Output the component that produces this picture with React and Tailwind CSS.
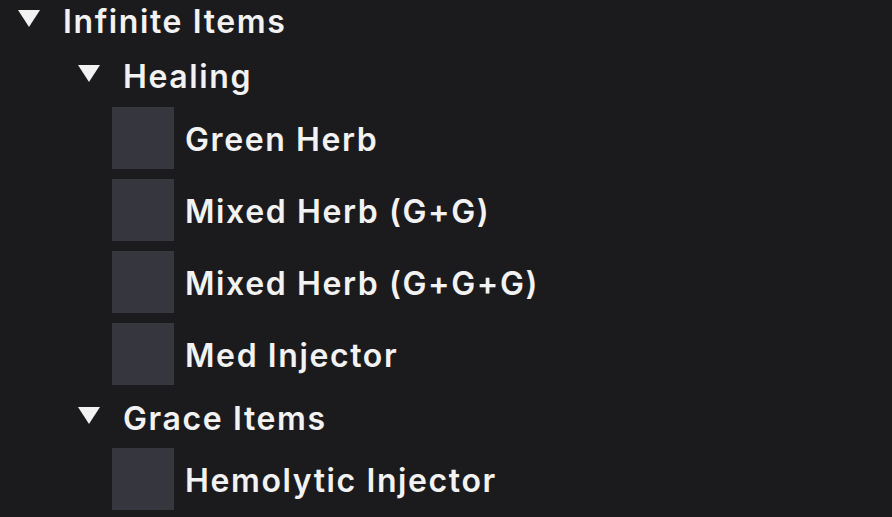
const healing = ['Green Herb', 'Mixed Herb (G+G)', 'Mixed Herb (G+G+G)', 'Med Injector'];
const grace = ['Hemolytic Injector'];

function Arrow() {
  return (
    <svg width="24" height="18" viewBox="0 0 24 18" className="shrink-0">
      <polygon points="1,1 23,1 12,18" fill="#f2f2f2" />
    </svg>
  );
}

function Node({ label, className = '' }) {
  return (
    <div className={`flex h-[42px] items-center ${className}`}>
      <div className="mb-[8px] flex w-[46px] justify-start">
        <Arrow />
      </div>
      <span className="text-[32px] font-semibold leading-none tracking-[1.6px]">{label}</span>
    </div>
  );
}

function Item({ label }) {
  return (
    <div className="flex h-[62px] items-center gap-[11px]">
      <div className="h-[62px] w-[62px] bg-[#36363f]" />
      <span className="pt-[4px] text-[32px] font-semibold leading-none tracking-[1.6px]">{label}</span>
    </div>
  );
}

export default function App() {
  return (
    <div className="h-[517px] w-[892px] overflow-hidden bg-[#1b1b1d] pl-[17px] text-[#f2f2f2]" style={{ fontFamily: 'Inter, Roboto, "Liberation Sans", sans-serif' }}>
      <Node label="Infinite Items" className="mt-[1px]" />
      <div className="pl-[60px]">
        <Node label="Healing" className="mt-[13px]" />
        <div className="ml-[35px] mt-[9px] flex flex-col gap-[10px]">
          {healing.map(h => <Item key={h} label={h} />)}
        </div>
        <Node label="Grace Items" className="mt-[13px]" />
        <div className="ml-[35px] mt-[8px] flex flex-col gap-[10px]">
          {grace.map(h => <Item key={h} label={h} />)}
        </div>
      </div>
    </div>
  );
}
